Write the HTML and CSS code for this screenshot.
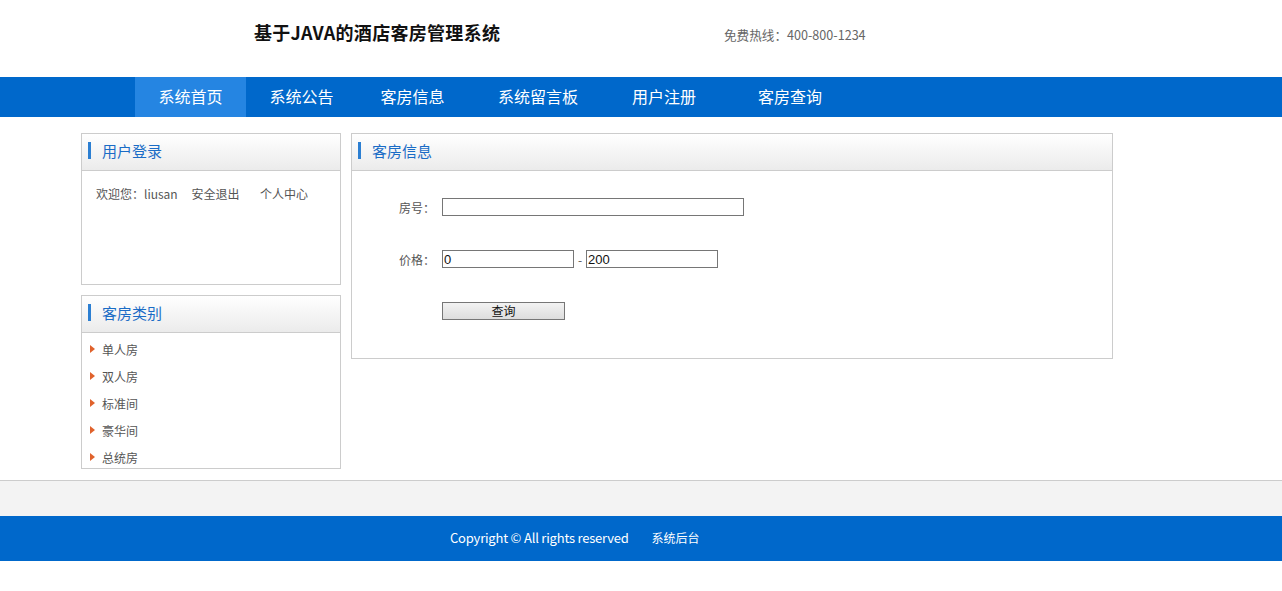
FILE: index.html
```html
<!DOCTYPE html>
<html lang="zh-CN">
<head>
  <meta charset="UTF-8" />
  <title>基于JAVA的酒店客房管理系统</title>
  <link rel="stylesheet" href="styles.css">
</head>
<body>
  <div class="header">
    <h1 class="logo">基于JAVA的酒店客房管理系统</h1>
    <div class="hotline">免费热线：400-800-1234</div>
  </div>

  <div class="nav">
    <ul>
      <li class="w111 active"><a href="#">系统首页</a></li>
      <li class="w111"><a href="#">系统公告</a></li>
      <li class="w111"><a href="#">客房信息</a></li>
      <li class="w140"><a href="#">系统留言板</a></li>
      <li class="w112"><a href="#">用户注册</a></li>
      <li class="w140"><a href="#">客房查询</a></li>
    </ul>
  </div>

  <div class="main">
    <div class="side">
      <div class="panel">
        <div class="panel-hd"><span class="bar"></span>用户登录</div>
        <div class="panel-bd login-bd">
          <span>欢迎您：liusan</span>
          <a href="#" class="gap1">安全退出</a>
          <a href="#" class="gap2">个人中心</a>
        </div>
      </div>

      <div class="panel">
        <div class="panel-hd"><span class="bar"></span>客房类别</div>
        <div class="panel-bd cat-bd">
          <ul class="cat-list">
            <li><a href="#">单人房</a></li>
            <li><a href="#">双人房</a></li>
            <li><a href="#">标准间</a></li>
            <li><a href="#">豪华间</a></li>
            <li><a href="#">总统房</a></li>
          </ul>
        </div>
      </div>
    </div>

    <div class="panel content">
      <div class="panel-hd"><span class="bar"></span>客房信息</div>
      <div class="panel-bd search-bd">
        <form onsubmit="return false;">
          <div class="row">
            <label class="lbl">房号：</label>
            <input type="text" class="ipt-long">
          </div>
          <div class="row">
            <label class="lbl">价格：</label>
            <input type="text" class="ipt-short" value="0">
            <span class="dash">-</span>
            <input type="text" class="ipt-short" value="200">
          </div>
          <div class="row">
            <span class="lbl"></span>
            <button type="submit" class="btn">查询</button>
          </div>
        </form>
      </div>
    </div>
  </div>

  <div class="footer">
    <div class="footer-gray"></div>
    <div class="footer-blue">
      <span class="copy">Copyright © All rights reserved</span>
      <a href="#">系统后台</a>
    </div>
  </div>
</body>
</html>
```

FILE: styles.css
```css
body {
  margin: 0;
  font-family: "Noto Sans CJK SC", "Liberation Sans", sans-serif;
  font-size: 12px;
  color: #555;
  background: #fff;
}
a {
  text-decoration: none;
  color: inherit;
}
ul {
  margin: 0;
  padding: 0;
  list-style: none;
}
.header {
  height: 77px;
  display: flex;
  align-items: flex-start;
  padding-left: 254px;
}
.logo {
  margin: 20px 0 0;
  width: 470px;
  font-size: 18px;
  line-height: 24px;
  font-weight: bold;
  letter-spacing: 0.3px;
  color: #111;
}
.hotline {
  margin-top: 26px;
  font-size: 12.6px;
  line-height: 18px;
  color: #666;
}
.nav {
  height: 40px;
  background-color: #0068cb;
}
.nav ul {
  display: flex;
  margin-left: 135px;
}
.nav li {
  text-align: center;
}
.nav li a {
  display: block;
  line-height: 38px;
  padding-bottom: 2px;
  font-size: 16px;
  color: #fff;
}
.nav li.active {
  background-color: #2585e2;
}
.w111 { width: 111px; }
.w112 { width: 112px; }
.w140 { width: 140px; }
.main {
  display: flex;
  align-items: flex-start;
  padding-left: 81px;
  margin-top: 16px;
}
.side {
  width: 260px;
  display: flex;
  flex-direction: column;
  gap: 10px;
}
.panel {
  border: 1px solid #ccc;
  background: #fff;
}
.panel-hd {
  height: 32px;
  padding-bottom: 4px;
  border-bottom: 1px solid #ccc;
  background: linear-gradient(#ffffff, #ebebeb);
  padding-left: 6px;
  font-size: 15px;
  color: #1a6cc6;
  display: flex;
  align-items: center;
}
.bar {
  width: 3px;
  height: 17px;
  background-color: #2c7fd2;
  margin-right: 11px;
}
.login-bd {
  height: 113px;
  padding: 13px 0 0 14px;
  box-sizing: border-box;
  line-height: 20px;
  color: #555;
}
.gap1 { margin-left: 11px; }
.gap2 { margin-left: 18px; }
.cat-bd {
  height: 135px;
  overflow: hidden;
  padding-top: 3px;
  box-sizing: border-box;
}
.cat-list li {
  line-height: 27px;
  padding-left: 20px;
  position: relative;
  color: #555;
}
.cat-list li::before {
  content: "";
  position: absolute;
  left: 8px;
  top: 9px;
  border-left: 5px solid #e0622c;
  border-top: 4.5px solid transparent;
  border-bottom: 4.5px solid transparent;
}
.content {
  width: 760px;
  margin-left: 10px;
}
.search-bd {
  padding: 27px 0 38px;
}
.row {
  display: flex;
  align-items: center;
  height: 18px;
  margin-bottom: 34px;
}
.row:last-child {
  margin-bottom: 0;
}
.lbl {
  width: 83px;
  text-align: right;
  margin-right: 7px;
  font-size: 12px;
  color: #555;
}
input[type="text"] {
  height: 18px;
  box-sizing: border-box;
  border: 1px solid #767676;
  padding: 0 1px;
  font-family: "Liberation Sans", Arial, sans-serif;
  font-size: 13px;
  color: #111;
  margin: 0;
}
.ipt-long {
  width: 302px;
}
.ipt-short {
  width: 132px;
}
.dash {
  width: 12px;
  text-align: center;
  color: #555;
}
.btn {
  width: 123px;
  height: 18px;
  padding: 0;
  border: 1px solid #767676;
  background: linear-gradient(#f2f2f2, #dddddd);
  font-family: "Noto Sans CJK SC", sans-serif;
  font-size: 12px;
  line-height: 16px;
  color: #111;
}
.footer {
  margin-top: 11px;
}
.footer-gray {
  height: 35px;
  border-top: 1px solid #ccc;
  background-color: #f3f3f3;
}
.footer-blue {
  height: 45px;
  line-height: 44px;
  background-color: #0068cb;
  color: #fff;
  padding-left: 450px;
  font-size: 12px;
}
.copy {
  font-size: 13px;
  letter-spacing: -0.2px;
}
.footer-blue a {
  margin-left: 20px;
}
```
